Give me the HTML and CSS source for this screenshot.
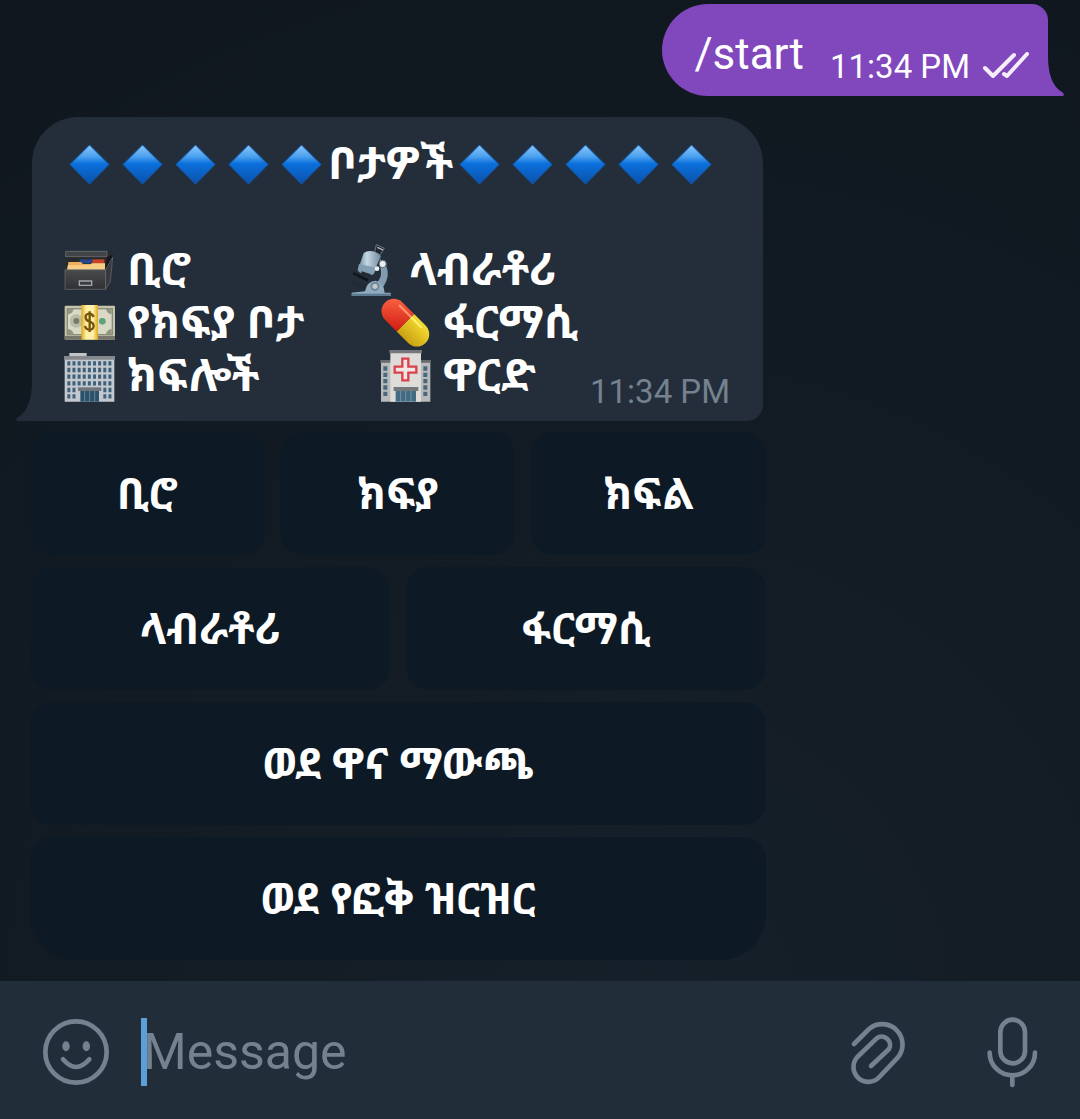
FILE: index.html
```html
<!DOCTYPE html>
<html lang="am">
<head>
<meta charset="utf-8">
<meta name="viewport" content="width=device-width, initial-scale=1">
<title>Chat</title>
<link rel="stylesheet" href="styles.css">
</head>
<body>
<svg class="defs" aria-hidden="true">
  <defs>
    <linearGradient id="blue" x1="0" y1="0" x2="0" y2="1">
      <stop offset="0" stop-color="#8cc8fb"/><stop offset=".3" stop-color="#4aa0ee"/><stop offset=".48" stop-color="#0b70dc"/><stop offset="1" stop-color="#0b51aa"/>
    </linearGradient>
    <linearGradient id="red" x1="0" y1="0" x2="1" y2="1"><stop offset="0" stop-color="#ff6a48"/><stop offset="1" stop-color="#d01c12"/></linearGradient>
    <linearGradient id="yellow" x1="0" y1="0" x2="0" y2="1"><stop offset="0" stop-color="#f5dc32"/><stop offset="1" stop-color="#c9a012"/></linearGradient>
    <linearGradient id="band" x1="0" y1="0" x2="1" y2="0"><stop offset="0" stop-color="#e0a818"/><stop offset=".3" stop-color="#fff0a8"/><stop offset=".7" stop-color="#fff0a8"/><stop offset="1" stop-color="#e0a818"/></linearGradient>
    <linearGradient id="steel" x1="0" y1="0" x2="1" y2="0"><stop offset="0" stop-color="#6d8496"/><stop offset=".4" stop-color="#c4d7e4"/><stop offset="1" stop-color="#70899b"/></linearGradient>
    <linearGradient id="box" x1="0" y1="0" x2="0" y2="1"><stop offset="0" stop-color="#4a4b4d"/><stop offset="1" stop-color="#303134"/></linearGradient>
    <symbol id="diamond" viewBox="0 -1 53 53"><path d="M26.500 7L46 26.500L26.500 46L7 26.500Z" fill="url(#blue)" stroke="#0f5cb4"/></symbol>
  </defs>
</svg>

<main class="chat">
  <section class="bubble bubble-out">
    <span class="command">/start</span>
    <span class="sent"><time>11:34 PM</time>
      <svg class="ticks" viewBox="0 0 46 27" role="img" aria-label="Read"><path d="M2 16L10 24L31 3M21 22L24 24L44 2"/></svg>
    </span>
    <svg class="tail tail-out" viewBox="0 0 16 40" aria-hidden="true"><path d="M0 0V40H15Q17 38 14 36Q0 28 0 0Z"/></svg>
  </section>

  <section class="bubble bubble-in">
    <h1 class="title">
      <svg class="emoji"><use href="#diamond"/></svg><svg class="emoji"><use href="#diamond"/></svg><svg class="emoji"><use href="#diamond"/></svg><svg class="emoji"><use href="#diamond"/></svg><svg class="emoji"><use href="#diamond"/></svg>
      <span class="title-text">ቦታዎች</span>
      <svg class="emoji"><use href="#diamond"/></svg><svg class="emoji"><use href="#diamond"/></svg><svg class="emoji"><use href="#diamond"/></svg><svg class="emoji"><use href="#diamond"/></svg><svg class="emoji"><use href="#diamond"/></svg>
    </h1>
    <div class="places">
      <div class="row row-near">
        <span class="place">
          <svg class="emoji" viewBox="70 23 159 159" aria-hidden="true">
            <path d="M78 48H205L219 58L208 160H78Z" fill="#292a2d"/><path d="M78 48H202V64H78Z" fill="#414346" stroke="#777b80" stroke-width="2"/>
            <path d="M202 64L219 58L215 96L197 104Z" fill="#191a1d"/><path d="M120 72H158V84H120Z" fill="#27468c"/><path d="M158 72H194V88H158Z" fill="#c94427"/><path d="M86 80H124L130 86H196V108H84Z" fill="#edb15d"/><path d="M84 90H150L156 84H196V108H82Z" fill="#f6ce86"/>
            <path d="M76 103H198V162H76Z" fill="url(#box)" stroke="#707479" stroke-width="2"/><path d="M198 103L219 66L212 140L198 161Z" fill="#37393c" stroke="#6c7075" stroke-width="2"/><path d="M119 137H156V150H119Z" fill="#3a3c40" stroke="#a4a7aa" stroke-width="4"/>
          </svg>ቢሮ</span>
        <span class="place">
          <svg class="emoji" viewBox="46 25 159 159" aria-hidden="true">
            <path d="M140 30L164 41L151 61L135 52Z" fill="#24282e" stroke="#8897a3" stroke-width="2"/><path d="M143 38L160 46" stroke="#b8c6d0" stroke-width="4"/><path d="M150 72Q178 90 174 125Q168 154 148 170L120 162Q158 137 154 112Z" fill="#819caf"/>
            <path d="M102 55Q125 39 154 64L130 118Q110 130 84 108Z" fill="url(#steel)"/><path d="M88 88L141 99L132 119Q108 125 84 106Z" fill="#829eb1"/><path d="M96 110L124 119L118 126L94 119Z" fill="#24282e"/>
            <path d="M72 112L116 133L113 141L69 119Z" fill="#11161c"/><path d="M68 135L118 156L114 164L70 153Z" fill="#222a33"/><path d="M106 170Q112 139 138 138Q163 143 165 174H183V183H66V174Z" fill="#8eabc0"/><path d="M66 177H183V183H66Z" fill="#5b788d"/>
            <circle cx="136" cy="155" r="13" fill="#6c8293"/><circle cx="136" cy="155" r="8" fill="#c5c8ca"/><circle cx="159" cy="88" r="11" fill="#e9edf0" stroke="#526474" stroke-width="3"/><circle cx="142" cy="102" r="7" fill="#eef1f3"/>
          </svg>ላብራቶሪ</span>
      </div>
      <div class="row">
        <span class="place">
          <svg class="emoji" viewBox="69 183 159 159" aria-hidden="true">
            <rect x="74" y="212" width="151" height="102" rx="3" fill="#c5c5ad"/><path d="M74 303H225V314H74Z" fill="#77776b"/><rect x="82" y="221" width="135" height="78" fill="#d9d9c5" stroke="#8a8e78" stroke-width="4"/>
            <circle cx="109" cy="258" r="20" fill="#bbbda8"/><circle cx="109" cy="258" r="9" fill="#777b6b"/><circle cx="187" cy="259" r="10" fill="#5da379"/><path d="M84 222h17q-3 15-17 16zM215 222h-17q3 15 17 16zM84 298h17q-3-15-17-16zM215 298h-17q3-15 17-16z" fill="#92967f"/>
            <path d="M124 210H174V314H124Z" fill="url(#band)"/><path d="M161 246Q157 236 148 236Q136 237 137 248Q138 257 149 260Q161 264 161 273Q160 284 149 284Q138 284 135 273M149 229V291" fill="none" stroke="#77520a" stroke-width="7"/>
          </svg>የክፍያ ቦታ</span>
        <span class="place">
          <svg class="emoji" viewBox="148 183 159 159" aria-hidden="true">
            <g transform="rotate(45 227 263)"><path d="M227 226H276A37 37 0 0 1 276 300H227Z" fill="url(#yellow)"/><path d="M227 226H178A37 37 0 0 0 178 300H227Z" fill="url(#red)"/><path d="M179 239H225" stroke="#ff8e6b" stroke-width="7" stroke-linecap="round"/><path d="M230 239H270" stroke="#fff176" stroke-width="6" stroke-linecap="round"/></g>
          </svg>ፋርማሲ</span>
      </div>
      <div class="row">
        <span class="place">
          <svg class="emoji" viewBox="69 349 159 159" aria-hidden="true">
            <path d="M88 361H140V374H88Z" fill="#c2c4c5"/><path d="M74 374H223V507H74Z" fill="#c3c9ce"/><path d="M72 370H225V381H72Z" fill="#85898d"/>
            <g fill="none" stroke="#3e6079" stroke-width="13" stroke-dasharray="9 6.400"><path d="M82 392H217M82 412H217M82 432H217M82 452H217"/><path d="M82 472H112M82 491H112M190 472H217M190 491H217"/></g>
            <path d="M114 464H184V475H114Z" fill="#6f757b"/><path d="M121 475H177V507H121Z" fill="#2c526a"/><path d="M134 475V507M149 475V507M164 475V507" stroke="#83a0b1" stroke-width="2"/>
          </svg>ክፍሎች</span>
        <span class="place">
          <svg class="emoji" viewBox="149 349 159 159" aria-hidden="true">
            <path d="M155 386H303V507H155Z" fill="#b9bbbb"/><path d="M153 382H305V390H153Z" fill="#66696e"/><path d="M183 356H275V507H183Z" fill="#dddcd9"/><path d="M180 352H278V362H180Z" fill="#74777b"/>
            <g stroke="#48687d" stroke-width="12" stroke-dasharray="13 6"><path d="M168 401V495M288 401V495"/></g>
            <path d="M219 378H237V402H261V420H237V443H219V420H196V402H219Z" fill="#f2e5e5" stroke="#d9424b" stroke-width="7"/>
            <path d="M193 463H267V475H193Z" fill="#73777c"/><path d="M199 475H260V507H199Z" fill="#416b83"/><path d="M214 475V507M229 475V507M245 475V507" stroke="#8fa7b4" stroke-width="2"/>
          </svg>ዋርድ</span>
      </div>
    </div>
    <time class="received">11:34 PM</time>
    <svg class="tail tail-in" viewBox="0 0 16 40" aria-hidden="true"><path d="M16 0V40H1Q-1 38 2 36Q16 28 16 0Z"/></svg>
  </section>

  <div class="keyboard">
    <div class="keys"><button type="button">ቢሮ</button><button type="button">ክፍያ</button><button type="button">ክፍል</button></div>
    <div class="keys"><button type="button">ላብራቶሪ</button><button type="button">ፋርማሲ</button></div>
    <div class="keys"><button type="button">ወደ ዋና ማውጫ</button></div>
    <div class="keys"><button type="button">ወደ የፎቅ ዝርዝር</button></div>
  </div>
</main>

<footer class="composer">
  <button class="tool" type="button" aria-label="Emoji"><svg class="icon-emoji" viewBox="130 148 198 198"><circle cx="229" cy="247" r="92"/><path d="M190 269Q229 315 269 269"/><g class="eyes"><ellipse cx="199" cy="230" rx="11" ry="15"/><ellipse cx="260" cy="230" rx="11" ry="15"/></g></svg></button>
  <div class="field"><input type="text" placeholder="Message" aria-label="Message"><span class="caret"></span></div>
  <button class="tool" type="button" aria-label="Attach"><svg class="icon-clip" viewBox="60 58 171 201"><path d="M72 133L117 88A61 61 0 0 1 203 174L148 232A44 44 0 0 1 82 172L140 116A25 25 0 0 1 177 148L123 199"/></svg></button>
  <button class="tool" type="button" aria-label="Record voice"><svg class="icon-mic" viewBox="471 51 153 213"><rect x="511" y="59" width="74" height="131" rx="37"/><path d="M479 158A68 68 0 0 0 615 158M547 226V255"/></svg></button>
</footer>
</body>
</html>
```
FILE: styles.css
```css
* { box-sizing: border-box; }

body {
  margin: 0;
  min-height: 100vh;
  display: flex;
  flex-direction: column;
  color: #fff;
  font-family: Roboto, "Noto Sans Ethiopic", "Noto Sans", sans-serif;
  background: radial-gradient(circle at 60% 90%, #15202a 0%, #141d26 30%, #111922 65%, #10171e 100%);
}

button, input {
  border: 0;
  padding: 0;
  color: inherit;
  background: none;
  font: inherit;
}

.defs { position: absolute; width: 0; height: 0; }

.chat {
  flex: 1;
  display: flex;
  flex-direction: column;
  align-items: flex-start;
  padding: 4px 32px 20px;
}

.bubble { position: relative; }

.bubble-out {
  align-self: flex-end;
  display: flex;
  gap: 26px;
  height: 92px;
  padding: 0 19px 0 32px;
  border-radius: 46px 16px 0 46px;
  background: #8147bd;
}

.command { font-size: 44px; line-height: 100px; }

.sent {
  display: flex;
  gap: 13px;
  font-size: 33px;
  line-height: 126px;
}

.ticks {
  width: 46px;
  height: 27px;
  margin-top: 48px;
  fill: none;
  stroke: #f5eefa;
  stroke-width: 4;
  stroke-linecap: round;
  stroke-linejoin: round;
}

.tail { position: absolute; bottom: 0; width: 16px; height: 40px; }
.tail-out { left: 100%; fill: #8147bd; }
.tail-in { right: 100%; fill: #232e3a; }

.bubble-in {
  width: 731px;
  max-width: 100%;
  margin-top: 21px;
  padding: 20px 31px 19px;
  border-radius: 46px 46px 16px 0;
  background: #232e3a;
  font-size: 45px;
  font-weight: 700;
  line-height: 53px;
}

.title {
  display: flex;
  margin: 0;
  font: inherit;
}

.title-text { width: 125px; text-align: center; white-space: nowrap; }

.emoji { flex: none; width: 53px; height: 53px; }

.places { margin-top: 53px; }

.row { display: grid; grid-template-columns: 316px 1fr; }
.row-near { grid-template-columns: 282px 1fr; }

.place { display: flex; gap: 11px; white-space: nowrap; }

.received {
  position: absolute;
  right: 33px;
  bottom: 9px;
  color: #74828f;
  font-size: 33px;
  font-weight: 400;
  line-height: 40px;
}

.keyboard {
  display: flex;
  flex-direction: column;
  gap: 12px;
  width: 736px;
  max-width: 100%;
  margin: 11px -2px 0;
}

.keys { display: flex; gap: 16px; }

.keys button {
  flex: 1 1 0;
  height: 123px;
  padding-bottom: 2px;
  border-radius: 22px;
  background: #0d1a25;
  font-size: 43px;
  font-weight: 700;
}

.keys:last-child button { border-radius: 22px 22px 46px 46px; }

.composer {
  display: flex;
  align-items: center;
  height: 138px;
  padding: 4px 42px 0 43px;
  color: #74828f;
  background: #222d3a;
}

.tool { flex: none; display: flex; }

.tool svg {
  fill: none;
  stroke: #74828f;
  stroke-width: 14;
  stroke-linecap: round;
  stroke-linejoin: round;
}

.tool .eyes { fill: #74828f; stroke: none; }

.icon-emoji { width: 66px; height: 66px; }
.icon-clip { width: 57px; height: 67px; margin-right: 80px; }
.icon-mic { width: 51px; height: 71px; }

.field { position: relative; flex: 1; margin-left: 32px; }

.field input {
  display: block;
  width: 100%;
  height: 68px;
  padding-left: 2px;
  outline: none;
  font-size: 50px;
}

.field input::placeholder { color: #74828f; opacity: 1; }

.caret {
  position: absolute;
  left: 0;
  top: 0;
  width: 6px;
  height: 68px;
  background: #5b9fd8;
}
```
